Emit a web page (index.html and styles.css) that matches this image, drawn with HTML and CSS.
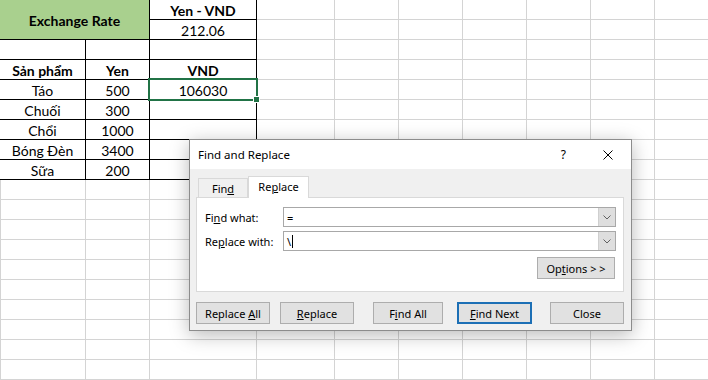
FILE: index.html
```html
<!DOCTYPE html>
<html lang="vi">
<head>
    <meta charset="UTF-8">
    <meta name="viewport" content="width=device-width, initial-scale=1.0">
    <title>Find and Replace</title>
    <link rel="stylesheet" href="styles.css">
</head>
<body>
    <div class="sheet">
        <!-- Data block A1:C9 -->
        <div class="data">
            <div class="cell title">Exchange Rate</div>
            <div class="cell bold">Yen - VND</div>
            <div class="cell">212.06</div>

            <div class="cell"></div>
            <div class="cell"></div>
            <div class="cell"></div>

            <div class="cell bold">Sản phẩm</div>
            <div class="cell bold">Yen</div>
            <div class="cell bold">VND</div>

            <div class="cell">Táo</div>
            <div class="cell">500</div>
            <div class="cell selected">106030</div>

            <div class="cell">Chuối</div>
            <div class="cell">300</div>
            <div class="cell"></div>

            <div class="cell">Chổi</div>
            <div class="cell">1000</div>
            <div class="cell"></div>

            <div class="cell">Bóng Đèn</div>
            <div class="cell">3400</div>
            <div class="cell"></div>

            <div class="cell">Sữa</div>
            <div class="cell">200</div>
            <div class="cell"></div>
        </div>

        <!-- Find and Replace dialog -->
        <div class="dialog">
            <div class="dialog-titlebar">
                <div class="dialog-title">Find and Replace</div>
                <div class="help-btn">?</div>
                <svg class="close-btn" width="10" height="10" viewBox="0 0 10 10">
                    <path d="M0.5 0.5 L9.5 9.5 M9.5 0.5 L0.5 9.5" stroke="#000" stroke-width="1" fill="none"/>
                </svg>
            </div>
            <div class="dialog-body">
                <div class="tabs">
                    <div class="tab">Fin<u>d</u></div>
                    <div class="tab active">Re<u>p</u>lace</div>
                </div>
                <div class="panel">
                    <div class="field-row">
                        <label class="field-label">Fi<u>n</u>d what:</label>
                        <div class="combo">
                            <div class="combo-text">=</div>
                            <div class="combo-arrow">
                                <svg width="8" height="5" viewBox="0 0 8 5"><path d="M0.5 0.5 L4 4 L7.5 0.5" stroke="#606060" fill="none"/></svg>
                            </div>
                        </div>
                    </div>
                    <div class="field-row">
                        <label class="field-label">Re<u>p</u>lace with:</label>
                        <div class="combo">
                            <div class="combo-text">\<span class="caret"></span></div>
                            <div class="combo-arrow">
                                <svg width="8" height="5" viewBox="0 0 8 5"><path d="M0.5 0.5 L4 4 L7.5 0.5" stroke="#606060" fill="none"/></svg>
                            </div>
                        </div>
                    </div>
                    <div class="options-row">
                        <button class="btn options-btn">Op<u>t</u>ions &gt; &gt;</button>
                    </div>
                </div>
                <div class="button-row">
                    <button class="btn btn-replace-all">Replace <u>A</u>ll</button>
                    <button class="btn btn-replace"><u>R</u>eplace</button>
                    <button class="btn btn-find-all">F<u>i</u>nd All</button>
                    <button class="btn btn-find-next default"><u>F</u>ind Next</button>
                    <button class="btn btn-close">Close</button>
                </div>
            </div>
        </div>
    </div>
</body>
</html>
```

FILE: styles.css
```css
/* Core Styling */
*, *:before, *:after {
    margin: 0;
    padding: 0;
    box-sizing: border-box;
}

body {
    background-color: #fff;
    color: #000;
    font-family: Lato, "Liberation Sans", sans-serif;
}

/* Worksheet with gridlines */
.sheet {
    position: relative;
    width: 708px;
    height: 380px;
    overflow: hidden;
    background:
        linear-gradient(#d4d4d4, #d4d4d4) 0 0 / 1px 100% no-repeat,
        linear-gradient(#d4d4d4, #d4d4d4) 85px 0 / 1px 100% no-repeat,
        linear-gradient(#d4d4d4, #d4d4d4) 149px 0 / 1px 100% no-repeat,
        linear-gradient(#d4d4d4, #d4d4d4) 256px 0 / 1px 100% no-repeat,
        repeating-linear-gradient(to right, transparent 0 63px, #d4d4d4 63px 64px) 271px 0 / 437px 100% no-repeat,
        repeating-linear-gradient(to bottom, transparent 0 19px, #d4d4d4 19px 20px);
}

.data {
    display: grid;
    grid-template-columns: 86px 64px 107px;
    grid-auto-rows: 20px;
    width: 257px;
}

.cell {
    display: flex;
    align-items: center;
    justify-content: center;
    background-color: #fff;
    border-right: 1px solid #000;
    border-bottom: 1px solid #000;
    font-size: 14px;
    white-space: nowrap;
    padding-top: 2px;
}

.cell.bold {
    font-weight: bold;
}

.cell.title {
    grid-column: 1 / 3;
    grid-row: 1 / 3;
    background-color: #a9d08e;
    font-weight: bold;
}

.cell.selected {
    position: relative;
}

.cell.selected:after {
    content: "";
    position: absolute;
    top: -2px;
    left: -2px;
    right: -2px;
    bottom: -2px;
    border: 2px solid #217346;
    z-index: 1;
}

.cell.selected:before {
    content: "";
    position: absolute;
    right: -4px;
    bottom: -4px;
    width: 7px;
    height: 7px;
    background-color: #217346;
    border: 1px solid #fff;
    z-index: 2;
}

/* Dialog */
.dialog {
    position: absolute;
    left: 189px;
    top: 139px;
    width: 443px;
    height: 192px;
    display: flex;
    flex-direction: column;
    background-color: #f0f0f0;
    border: 1px solid #8c8c8c;
    box-shadow: 0 4px 18px rgba(0, 0, 0, 0.28);
    font-family: "Noto Sans", "Open Sans", sans-serif;
    font-size: 11px;
    color: #000;
}

.dialog-titlebar {
    display: flex;
    align-items: center;
    height: 29px;
    padding-left: 8px;
    background-color: #fff;
}

.dialog-title {
    flex: 1;
    font-size: 11.5px;
}

.help-btn {
    font-size: 12px;
    margin-right: 37px;
}

.close-btn {
    margin-right: 18px;
}

.dialog-body {
    flex: 1;
    display: flex;
    flex-direction: column;
    padding: 7px 7px 0 6px;
}

.tabs {
    display: flex;
    align-items: flex-end;
    height: 21px;
    padding-left: 2px;
}

.tab {
    display: flex;
    align-items: center;
    justify-content: center;
    width: 50px;
    height: 19px;
    border: 1px solid #d9d9d9;
    border-bottom: none;
    background-color: #f0f0f0;
}

.tab.active {
    width: 61px;
    height: 22px;
    margin-bottom: -1px;
    background-color: #fff;
    position: relative;
    z-index: 1;
    padding-bottom: 2px;
}

.panel {
    height: 95px;
    border: 1px solid #d9d9d9;
    background-color: #fff;
    padding: 9px 7px 0 8px;
}

.field-row {
    display: flex;
    align-items: center;
    margin-bottom: 4px;
}

.field-label {
    width: 78px;
}

.combo {
    flex: 1;
    display: flex;
    height: 20px;
    border: 1px solid #a8a8a8;
    background-color: #fff;
}

.combo-text {
    flex: 1;
    display: flex;
    align-items: center;
    padding-left: 3px;
}

.caret {
    display: inline-block;
    width: 1px;
    height: 13px;
    margin-left: 1px;
    background-color: #000;
}

.combo-arrow {
    width: 17px;
    display: flex;
    align-items: center;
    justify-content: center;
    background-color: #dedede;
    border-left: 1px solid #cfcfcf;
}

.options-row {
    display: flex;
    justify-content: flex-end;
    margin-top: 6px;
    padding-right: 1px;
}

.btn {
    height: 22px;
    background-color: #e1e1e1;
    border: 1px solid #adadad;
    font-family: inherit;
    font-size: 11px;
    color: #000;
}

.options-btn {
    width: 78px;
}

.button-row {
    display: flex;
    margin-top: 10px;
}

.btn-replace-all {
    width: 74px;
}

.btn-replace {
    width: 74px;
    margin-left: 10px;
}

.btn-find-all {
    width: 70px;
    margin-left: 19px;
}

.btn-find-next {
    width: 75px;
    margin-left: 14px;
}

.btn-close {
    width: 74px;
    margin-left: 18px;
}

.btn.default {
    border: 2px solid #1c6fb5;
}
```
